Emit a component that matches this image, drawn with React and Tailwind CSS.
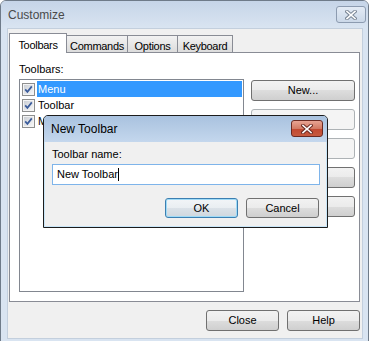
import React from "react";

/* Win7 style push button */
function Btn({children, disabled, focus, className = ""}) {
    const base = "flex items-center justify-center rounded-[3px] border text-[11px]";
    const look = disabled
        ? "border-[#adb2b5] bg-[#f4f4f4] text-[#838383]"
        : focus
            ? "border-[#3c7fb1] bg-[linear-gradient(#f2f5f7,#e9eef2_50%,#dbe2e8_50%,#cfd7de)] shadow-[inset_0_0_0_1px_#9fdbf7] text-black"
            : "border-[#707070] bg-[linear-gradient(#f2f2f2,#ebebeb_50%,#dddddd_50%,#cfcfcf)] text-black";
    return <div className={`${base} ${look} ${className}`}>{children}</div>;
}

function CloseGlyph({dark}) {
    return (
        <svg width="12" height="10" viewBox="0 0 12 10">
            <path d="M2 1.5 L10 8.5 M10 1.5 L2 8.5" stroke={dark} strokeWidth="3.6" strokeLinecap="square"/>
            <path d="M2 1.5 L10 8.5 M10 1.5 L2 8.5" stroke="#ffffff" strokeWidth="1.6" strokeLinecap="square"/>
        </svg>
    );
}

function Check({checked}) {
    return (
        <svg width="13" height="13" viewBox="0 0 13 13" className="shrink-0">
            <defs>
                <linearGradient id="cbg" x1="0" y1="0" x2="1" y2="1">
                    <stop offset="0" stopColor="#cbcfd5"/>
                    <stop offset="1" stopColor="#f6f6f6"/>
                </linearGradient>
            </defs>
            <rect x="0.5" y="0.5" width="12" height="12" fill="#f4f4f4" stroke="#8e8f8f"/>
            <rect x="2" y="2" width="9" height="9" fill="url(#cbg)"/>
            {checked && (
                <path d="M3.2 6.4 L5.4 8.9 L9.8 3.4" fill="none" stroke="#3b5c9b" strokeWidth="1.7"/>
            )}
        </svg>
    );
}

const ITEMS = [
    {name: "Menu", sel: true},
    {name: "Toolbar"},
    {name: "M"},
];

const TABS = [
    {label: "Toolbars", w: "w-[58px]", active: true},
    {label: "Commands", w: "w-[62px]"},
    {label: "Options", w: "w-[51px]"},
    {label: "Keyboard", w: "w-[56px]"},
];

export default function App() {
    return (
        <div className="relative w-[371px] h-[341px] overflow-hidden bg-white font-['Liberation_Sans',Arial,sans-serif] text-[11px] text-black">
            {/* ---------- Customize window ---------- */}
            <div className="w-[369px] h-[345px] rounded-t-[6px] border border-[#6f7b89] bg-[#d9e4f1] flex flex-col">
                <div className="h-[27px] shrink-0 flex items-start justify-between pl-[7px] pr-[2px] rounded-t-[5px] bg-gradient-to-b from-[#c6d5e8] to-[#d9e4f1]">
                    <span className="mt-[7px] text-[12px] leading-[15px] text-[#4a4a4a]">Customize</span>
                    <div className="mt-[5px] w-[30px] h-[17px] rounded-[3px] border border-[#8c9bb0] bg-gradient-to-b from-[#e3ebf5] to-[#cbd8e8] flex items-center justify-center">
                        <CloseGlyph dark="#7b8796"/>
                    </div>
                </div>

                <div className="ml-[6px] mr-[5px] h-[311px] shrink-0 bg-[#f0f0f0] border border-[#c3cfdd] pl-[1px] pr-[2px] pt-[4px] flex flex-col">
                    {/* tabs */}
                    <div className="flex items-end h-[19px] relative z-10 tracking-[-0.3px]">
                        {TABS.map((t) =>
                            t.active ? (
                                <div key={t.label}
                                     className={`${t.w} h-[20px] -mb-px bg-white border border-b-0 border-[#898c95] flex items-start justify-center pt-[3px]`}>
                                    {t.label}
                                </div>
                            ) : (
                                <div key={t.label}
                                     className={`${t.w} h-[17px] -ml-px border border-b-0 border-[#898c95] bg-gradient-to-b from-[#f2f2f2] to-[#dcdcdc] flex items-start justify-center pt-[2px]`}>
                                    {t.label}
                                </div>
                            ),
                        )}
                    </div>

                    {/* tab page */}
                    <div className="w-[351px] h-[250px] shrink-0 bg-white border border-[#898c95] pl-[9px] pt-[10px]">
                        <div className="leading-[13px]">Toolbars:</div>
                        <div className="flex items-start mt-[3px]">
                            <div className="w-[225px] h-[213px] border border-[#828790] bg-white pt-[1px] pl-[2px] pr-[1px]">
                                {ITEMS.map((it) => (
                                    <div key={it.name} className="h-[16px] flex items-center">
                                        <Check checked/>
                                        <span
                                            className={`ml-[2px] flex-1 h-full flex items-center px-[1px] ${it.sel ? "bg-[#3399ff] text-white" : ""}`}>
                                            {it.name}
                                        </span>
                                    </div>
                                ))}
                            </div>
                            {/* rest of the column sits under the dialog */}
                            <div className="ml-[7px] pt-[1px] flex flex-col gap-[8px]">
                                <Btn className="w-[104px] h-[21px]">New...</Btn>
                                <Btn className="w-[104px] h-[21px]" disabled/>
                                <Btn className="w-[104px] h-[21px]" disabled/>
                                <Btn className="w-[104px] h-[21px]"/>
                                <Btn className="w-[104px] h-[21px]"/>
                            </div>
                        </div>
                    </div>

                    {/* bottom buttons */}
                    <div className="mt-[8px] flex justify-end gap-[8px]">
                        <Btn className="w-[73px] h-[21px]">Close</Btn>
                        <Btn className="w-[73px] h-[21px]">Help</Btn>
                    </div>
                </div>
            </div>

            {/* ---------- New Toolbar dialog (floating window) ---------- */}
            <div className="absolute left-[43px] top-[115px] w-[285px] h-[113px] rounded-t-[5px] border border-[#1c1c1c] bg-[#b9d1ea] shadow-[inset_0_0_0_1px_#c9e6f8] flex flex-col">
                <div className="h-[26px] shrink-0 flex items-start justify-between pl-[7px] pr-[4px] rounded-t-[4px] bg-gradient-to-b from-[#a9c2df] to-[#c4d7ed]">
                    <span className="mt-[6px] text-[12px] leading-[15px]">New Toolbar</span>
                    <div className="mt-[4px] w-[32px] h-[17px] rounded-[3px] border border-[#6b2a22] bg-[linear-gradient(#e8a493,#d27a64_50%,#c2472f_50%,#c65a3f)] flex items-center justify-center">
                        <CloseGlyph dark="#6b2a22"/>
                    </div>
                </div>
                <div className="mx-[1px] mb-[1px] flex-1 bg-[#f0f0f0] pl-[7px] pr-[6px] pt-[6px]">
                    <div className="leading-[13px]">Toolbar name:</div>
                    <div className="mt-[3px] h-[21px] border border-[#7eb4ea] bg-white flex items-center pl-[4px]">
                        <span>New Toolbar</span>
                        <span className="w-px h-[13px] bg-black"/>
                    </div>
                    <div className="mt-[13px] flex justify-end gap-[8px] pr-[1px]">
                        <Btn className="w-[73px] h-[20px]" focus>OK</Btn>
                        <Btn className="w-[73px] h-[20px]">Cancel</Btn>
                    </div>
                </div>
            </div>
        </div>
    );
}
